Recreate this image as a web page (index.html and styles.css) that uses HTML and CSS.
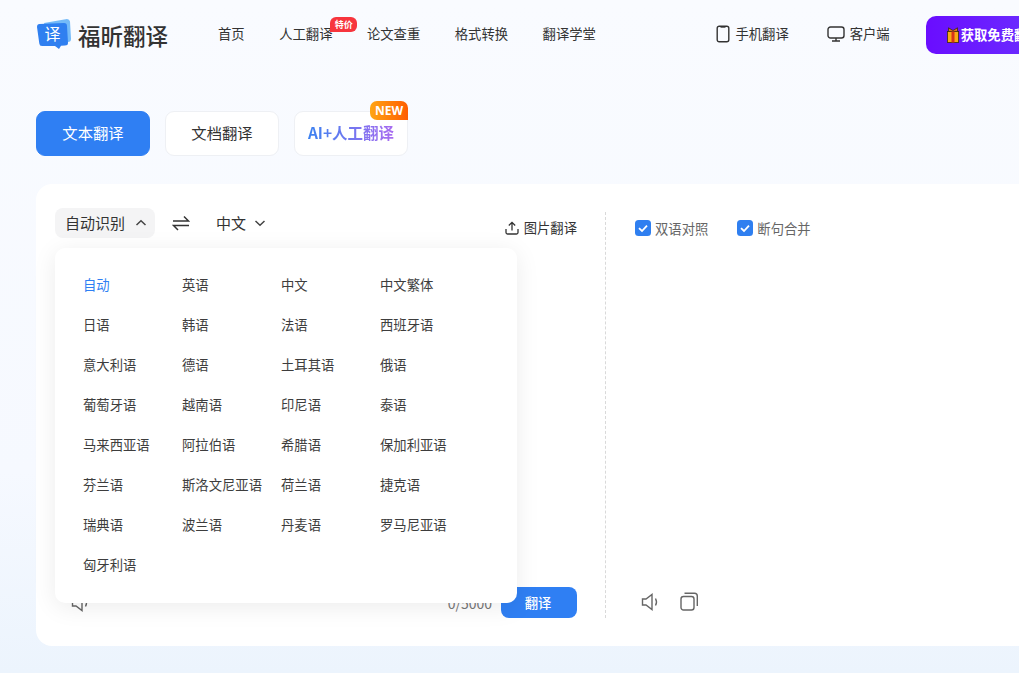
FILE: index.html
```html
<!DOCTYPE html>
<html lang="zh">
<head>
<meta charset="utf-8">
<title>福昕翻译</title>
<link rel="stylesheet" href="styles.css">
</head>
<body>
<div class="page">
  <header class="header">
    <div class="logo">
      <svg class="logo-mark" width="36" height="32" viewBox="0 0 36 32">
        <path d="M8 5 L31 1 Q33.500 1 34 3.500 L35 21 Q35 24 32 24 L14 27 Z" fill="#74baf8"/>
        <path d="M3.500 6 L28 5 Q31 5 31 8 L32 25 Q32 27.500 29 27.500 L25 27.800 L23 31 L19 28 L6 28 Q3.500 28 3.300 25.500 L1 9 Q1 6 3.500 6 Z" fill="#2f7ff0"/>
        <text x="16.500" y="22" class="logo-yi">译</text>
      </svg>
      <span class="logo-text">福昕翻译</span>
    </div>
    <nav class="nav">
      <a class="nav-link">首页</a>
      <a class="nav-link nav-badged">人工翻译<span class="badge-sale">特价</span></a>
      <a class="nav-link">论文查重</a>
      <a class="nav-link">格式转换</a>
      <a class="nav-link">翻译学堂</a>
    </nav>
    <div class="header-right">
      <a class="tool-link tool-phone">
        <svg width="14" height="18" viewBox="0 0 14 18" fill="none" stroke="#333" stroke-width="1.400"><rect x="1.200" y="1.200" width="11.600" height="15.600" rx="2"/><path d="M4.500 1.200h5v1.500h-5z" fill="#333" stroke="none"/></svg>
        手机翻译
      </a>
      <a class="tool-link tool-client">
        <svg width="18" height="16" viewBox="0 0 18 16" fill="none" stroke="#333" stroke-width="1.400"><rect x="1" y="1" width="16" height="11" rx="2.500"/><path d="M9 12v3M5 15h8"/></svg>
        客户端
      </a>
      <a class="vip-btn">
        <svg width="14" height="16" viewBox="0 0 14 16"><path d="M2.500 .8L7 3.500 11.500 .8V5h-9z" fill="#e0731c" stroke="#3a2a10" stroke-width=".8"/><rect x="1.400" y="4.500" width="11.200" height="11" fill="#f9a914" stroke="#3a2a10" stroke-width=".8"/><rect x="5.500" y="4.500" width="3" height="11" fill="#d9331a"/></svg>
        获取免费翻译额度
      </a>
    </div>
  </header>

  <div class="tabs">
    <button class="tab tab-active">文本翻译</button>
    <button class="tab">文档翻译</button>
    <button class="tab tab-ai"><span class="ai-text">AI+人工翻译</span><span class="badge-new">NEW</span></button>
  </div>

  <main class="card">
    <section class="pane-left">
      <div class="lang-bar">
        <div class="lang-select lang-open">自动识别
          <svg width="12" height="8" viewBox="0 0 12 8" fill="none" stroke="#444" stroke-width="1.500"><path d="M1.500 6L6 1.800 10.500 6"/></svg>
        </div>
        <svg class="swap" width="18" height="16" viewBox="0 0 18 16" fill="none" stroke="#333" stroke-width="1.500"><path d="M1 6h15.500L12 1.500M17 10.500H1.500L6 15"/></svg>
        <div class="lang-select lang-target">中文
          <svg width="12" height="8" viewBox="0 0 12 8" fill="none" stroke="#444" stroke-width="1.500"><path d="M1.500 2L6 6.200 10.500 2"/></svg>
        </div>
        <a class="img-trans">
          <svg width="14" height="14" viewBox="0 0 14 14" fill="none" stroke="#333" stroke-width="1.300"><path d="M7 9.500V1.500M3.800 4.500L7 1.300l3.200 3.200M1 8v3.500Q1 13 2.500 13h9q1.500 0 1.500-1.500V8"/></svg>
          图片翻译
        </a>
      </div>
      <div class="input-area"></div>
      <div class="pane-foot">
        <svg class="speaker" width="18" height="18" viewBox="0 0 18 18" fill="none" stroke="#666" stroke-width="1.400"><path d="M1.500 6h3.500L11 1.500v15L5 12H1.500zM14.500 5.500q2 3.500 0 7"/></svg>
        <span class="count">0/5000</span>
        <button class="go-btn">翻译</button>
      </div>
      <div class="dropdown">
        <span class="lang-item lang-current">自动</span><span class="lang-item">英语</span><span class="lang-item">中文</span><span class="lang-item">中文繁体</span>
        <span class="lang-item">日语</span><span class="lang-item">韩语</span><span class="lang-item">法语</span><span class="lang-item">西班牙语</span>
        <span class="lang-item">意大利语</span><span class="lang-item">德语</span><span class="lang-item">土耳其语</span><span class="lang-item">俄语</span>
        <span class="lang-item">葡萄牙语</span><span class="lang-item">越南语</span><span class="lang-item">印尼语</span><span class="lang-item">泰语</span>
        <span class="lang-item">马来西亚语</span><span class="lang-item">阿拉伯语</span><span class="lang-item">希腊语</span><span class="lang-item">保加利亚语</span>
        <span class="lang-item">芬兰语</span><span class="lang-item">斯洛文尼亚语</span><span class="lang-item">荷兰语</span><span class="lang-item">捷克语</span>
        <span class="lang-item">瑞典语</span><span class="lang-item">波兰语</span><span class="lang-item">丹麦语</span><span class="lang-item">罗马尼亚语</span>
        <span class="lang-item">匈牙利语</span>
      </div>
    </section>
    <section class="pane-right">
      <div class="options">
        <label class="check"><svg width="16" height="16" viewBox="0 0 16 16"><rect width="16" height="16" rx="3.500" fill="#2f7ff0"/><path d="M4 8.200l3 2.800 5-5.400" fill="none" stroke="#fff" stroke-width="1.800"/></svg>双语对照</label>
        <label class="check"><svg width="16" height="16" viewBox="0 0 16 16"><rect width="16" height="16" rx="3.500" fill="#2f7ff0"/><path d="M4 8.200l3 2.800 5-5.400" fill="none" stroke="#fff" stroke-width="1.800"/></svg>断句合并</label>
      </div>
      <div class="output-area"></div>
      <div class="right-foot">
        <svg width="18" height="18" viewBox="0 0 18 18" fill="none" stroke="#666" stroke-width="1.400"><path d="M1.500 6h3.500L11 1.500v15L5 12H1.500zM14.500 5.500q2 3.500 0 7"/></svg>
        <svg width="18" height="19" viewBox="0 0 18 19" fill="none" stroke="#666" stroke-width="1.400"><rect x="1" y="4.500" width="13" height="13.500" rx="2.500"/><path d="M4.500 1.200h10q2.800 0 2.800 2.800v10"/></svg>
      </div>
    </section>
  </main>
</div>
</body>
</html>
```
FILE: styles.css
```css
* { box-sizing: border-box; }
html, body { margin: 0; height: 100%; overflow: hidden; }
body {
  font-family: "Noto Sans CJK SC", "Noto Sans", sans-serif;
  color: #333;
  background: linear-gradient(180deg, #f9fbff 0%, #f6f9ff 70%, #ecf4fd 100%);
}
a { color: inherit; text-decoration: none; }
button { font-family: inherit; border: 0; cursor: pointer; }
.page { width: 1300px; height: 673px; padding: 0 0 0 36px; display: flex; flex-direction: column; }

.header { height: 69px; display: flex; align-items: center; flex: none; }
.logo { width: 182px; display: flex; align-items: center; gap: 6px; flex: none; }
.logo-mark { display: block; margin-top: -1px; }
.logo-yi { font-size: 16px; fill: #fff; text-anchor: middle; font-family: "Noto Sans CJK SC", sans-serif; }
.logo-text { font-size: 22.500px; line-height: 30px; color: #333; font-weight: 500; }
.nav { display: flex; gap: 34.500px; font-size: 13.330px; color: #333; position: relative; top: -1px; }
.nav-link { line-height: 20px; position: relative; white-space: nowrap; }
.badge-sale {
  position: absolute; left: 51px; top: -7px; width: 27px; height: 15px;
  background: #f7353d; color: #fff; font-size: 9px; font-weight: 700; line-height: 15px; text-align: center;
  border-radius: 6px 6px 6px 0;
}
.header-right { margin-left: 120.500px; display: flex; align-items: center; font-size: 13.330px; color: #333; }
.tool-link { display: flex; align-items: center; gap: 5px; white-space: nowrap; position: relative; top: -1px; }
.tool-phone { margin-right: 38px; }
.tool-client { margin-right: 36px; }
.vip-btn {
  display: flex; align-items: center; gap: 1px; width: 160px; height: 38px; padding-left: 20px;
  background: linear-gradient(90deg, #6a0dff, #6b3bff); border-radius: 10px;
  color: #fff; font-weight: 700; font-size: 13.330px; white-space: nowrap;
}

.tabs { display: flex; gap: 15px; margin-top: 42px; flex: none; }
.tab {
  position: relative; width: 114px; height: 45px; background: #fff; border: 1px solid #eef0f4;
  border-radius: 9px; font-size: 15.330px; line-height: 40px; color: #333; padding: 0 0 4px;
}
.tab-active { background: #2f7ff3; border-color: #2f7ff3; color: #fff; }
.ai-text {
  font-size: 15.500px; font-weight: 700;
  background: linear-gradient(90deg, #3c82f0, #a96bf0);
  -webkit-background-clip: text; background-clip: text; color: transparent;
}
.badge-new {
  position: absolute; right: -1px; top: -11px; width: 38px; height: 19px;
  background: linear-gradient(90deg, #ffa514, #ff5d00); color: #fff;
  font-family: "Open Sans", sans-serif; font-size: 12px; font-weight: 700; line-height: 19px; text-align: center;
  border-radius: 7px 7px 0 7px;
}

.card {
  margin-top: 28px; width: 1200px; height: 462px; background: #fff; border-radius: 16px;
  display: flex; padding: 24px 0 28px 19px; flex: none;
}
.pane-left { position: relative; width: 551px; padding-right: 28px; border-right: 1px dashed #d9d9d9; display: flex; flex-direction: column; margin-top: 4px; }
.lang-bar { display: flex; align-items: center; height: 30px; margin-top: -4px; font-size: 15px; line-height: 20px; color: #333; }
.lang-select { display: flex; align-items: center; gap: 10px; height: 30px; padding: 0 10px; border-radius: 8px; white-space: nowrap; position: relative; }
.lang-open { background: #f4f4f5; width: 100px; flex: none; padding-right: 0; }
.swap { margin: 0 17px; flex: none; }
.lang-target { padding: 0; margin-left: 9px; gap: 8px; }
.img-trans { margin-left: auto; display: flex; align-items: center; gap: 5px; font-size: 13.330px; position: relative; top: 5px; white-space: nowrap; }
.input-area { flex: 1; }
.pane-foot { display: flex; align-items: center; height: 31px; }
.speaker { margin-left: 16px; }
.count { margin-left: auto; font-size: 14px; color: #777; margin-right: 9px; }
.go-btn { width: 76px; height: 31px; background: #2f7ff3; color: #fff; font-size: 13.330px; font-weight: 500; border-radius: 8px; padding: 0 2px 0 0; }
.dropdown {
  position: absolute; left: 0; top: 36px; width: 462px; height: 355px; padding: 16px 0 0 28px;
  background: #fff; border-radius: 10px; box-shadow: 0 4px 24px rgba(0, 0, 0, 0.08);
  display: grid; grid-template-columns: repeat(4, 99px); grid-auto-rows: 40px; align-items: center; align-content: start;
  font-size: 13.330px; color: #3d3d3d; z-index: 2;
}
.lang-item { white-space: nowrap; }
.lang-current { color: #2f7ff3; }

.pane-right { flex: 1; padding-left: 29px; display: flex; flex-direction: column; margin-top: 4px; }
.options { display: flex; gap: 29px; height: 26px; align-items: center; font-size: 13.330px; color: #666; margin-top: 3px; margin-bottom: -3px; }
.check { display: flex; align-items: center; gap: 4px; white-space: nowrap; }
.output-area { flex: 1; }
.right-foot { display: flex; gap: 21px; align-items: center; height: 31px; padding-left: 6px; position: relative; top: -1px; }
```
